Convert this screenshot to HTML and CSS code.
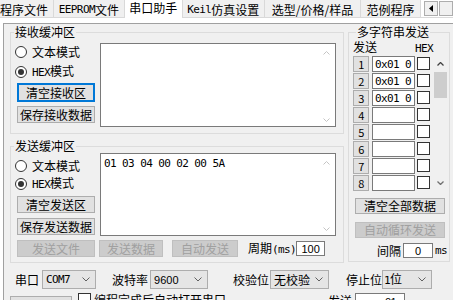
FILE: index.html
```html
<!DOCTYPE html>
<html lang="zh-CN">
<head>
    <meta charset="UTF-8">
    <title>串口助手</title>
    <link rel="stylesheet" href="styles.css">
</head>
<body>
<nav class="tabs">
    <div class="tab tab-first">程序文件</div>
    <div class="tab tab-eeprom"><span class="mono">EEPROM</span>文件</div>
    <div class="tab tab-serial">串口助手</div>
    <div class="tab tab-keil"><span class="mono">Keil</span>仿真设置</div>
    <div class="tab tab-select">选型/价格/样品</div>
    <div class="tab tab-demo">范例程序</div>
    <div class="tab-scroll">
        <span class="tab-arrow"><svg width="4" height="7" viewBox="0 0 4 7"><path d="M4 0V7L0 3.5z"/></svg></span>
        <span class="tab-arrow"></span>
    </div>
</nav>

<div class="page">
    <div class="panel">
        <div class="top">
            <div class="left-col">
                <!-- receive buffer -->
                <fieldset class="group recv">
                    <legend>接收缓冲区</legend>
                    <div class="group-body">
                        <div class="controls">
                            <label class="radio"><span class="dot"></span><span>文本模式</span></label>
                            <label class="radio checked"><span class="dot"></span><span><span class="mono">HEX</span>模式</span></label>
                            <button class="btn focused">清空接收区</button>
                            <button class="btn">保存接收数据</button>
                        </div>
                        <div class="textbox">
                            <div class="text"></div>
                            <div class="tb-scroll">
                                <svg width="7" height="4" viewBox="0 0 7 4"><path d="M.5 3.5 3.5.5 6.5 3.5" fill="none" stroke="#c4c4c4"/></svg>
                                <svg width="7" height="4" viewBox="0 0 7 4"><path d="M.5.5 3.5 3.5 6.5.5" fill="none" stroke="#c4c4c4"/></svg>
                            </div>
                        </div>
                    </div>
                </fieldset>

                <!-- send buffer -->
                <fieldset class="group send">
                    <legend>发送缓冲区</legend>
                    <div class="group-body">
                        <div class="controls">
                            <label class="radio"><span class="dot"></span><span>文本模式</span></label>
                            <label class="radio checked"><span class="dot"></span><span><span class="mono">HEX</span>模式</span></label>
                            <button class="btn">清空发送区</button>
                            <button class="btn">保存发送数据</button>
                        </div>
                        <div class="textbox">
                            <div class="text mono">01 03 04 00 02 00 5A</div>
                            <div class="tb-scroll">
                                <svg width="7" height="4" viewBox="0 0 7 4"><path d="M.5 3.5 3.5.5 6.5 3.5" fill="none" stroke="#c4c4c4"/></svg>
                                <svg width="7" height="4" viewBox="0 0 7 4"><path d="M.5.5 3.5 3.5 6.5.5" fill="none" stroke="#c4c4c4"/></svg>
                            </div>
                        </div>
                    </div>
                    <div class="send-actions">
                        <button class="btn off b-file">发送文件</button>
                        <button class="btn off b-data">发送数据</button>
                        <button class="btn off b-auto">自动发送</button>
                        <span class="period">周期<span class="mono">(ms)</span></span>
                        <span class="field period-val">100</span>
                    </div>
                </fieldset>
            </div>

            <!-- multi string send -->
            <fieldset class="group multi">
                <legend>多字符串发送</legend>
                <div class="multi-head">
                    <span>发送</span>
                    <span class="mono hex">HEX</span>
                </div>
                <div class="multi-list">
                    <div class="rows">
                        <div class="row"><button class="btn num mono">1</button><span class="cell mono">0x01 0</span><span class="check"></span></div>
                        <div class="row"><button class="btn num mono">2</button><span class="cell mono">0x01 0</span><span class="check"></span></div>
                        <div class="row"><button class="btn num mono">3</button><span class="cell mono">0x01 0</span><span class="check"></span></div>
                        <div class="row"><button class="btn num mono">4</button><span class="cell"></span><span class="check"></span></div>
                        <div class="row"><button class="btn num mono">5</button><span class="cell"></span><span class="check"></span></div>
                        <div class="row"><button class="btn num mono">6</button><span class="cell"></span><span class="check"></span></div>
                        <div class="row"><button class="btn num mono">7</button><span class="cell"></span><span class="check"></span></div>
                        <div class="row"><button class="btn num mono">8</button><span class="cell"></span><span class="check"></span></div>
                    </div>
                    <div class="vscroll">
                        <span class="vs-arrow"><svg width="7" height="4" viewBox="0 0 7 4"><path d="M.5 3.5 3.5.5 6.5 3.5" fill="none" stroke="#404040" stroke-width="1.3"/></svg></span>
                        <span class="vs-thumb"></span>
                        <span class="vs-track"></span>
                        <span class="vs-arrow"><svg width="7" height="4" viewBox="0 0 7 4"><path d="M.5.5 3.5 3.5 6.5.5" fill="none" stroke="#707070" stroke-width="1.3"/></svg></span>
                    </div>
                </div>
                <button class="btn wide">清空全部数据</button>
                <button class="btn wide off">自动循环发送</button>
                <div class="gap-row">
                    <span>间隔</span>
                    <span class="field gap-val">0</span>
                    <span class="mono ms">ms</span>
                </div>
            </fieldset>
        </div>

        <!-- serial settings -->
        <div class="serial">
            <span>串口</span>
            <span class="combo c-port"><span class="mono">COM7</span><svg width="8" height="5" viewBox="0 0 8 5"><path d="M.5.5 4 4 7.5.5" fill="none" stroke="#606060"/></svg></span>
            <span class="s-baud">波特率</span>
            <span class="combo c-baud"><span class="num-text">9600</span><svg width="8" height="5" viewBox="0 0 8 5"><path d="M.5.5 4 4 7.5.5" fill="none" stroke="#606060"/></svg></span>
            <span class="s-parity">校验位</span>
            <span class="combo c-parity"><span>无校验</span><svg width="8" height="5" viewBox="0 0 8 5"><path d="M.5.5 4 4 7.5.5" fill="none" stroke="#606060"/></svg></span>
            <span class="s-stop">停止位</span>
            <span class="combo c-stop"><span><span class="mono">1</span>位</span><svg width="8" height="5" viewBox="0 0 8 5"><path d="M.5.5 4 4 7.5.5" fill="none" stroke="#606060"/></svg></span>
        </div>

        <div class="extra">
            <button class="btn extra-btn"></button>
            <span class="check extra-check"></span>
            <span class="extra-label">编程完成后自动打开串口</span>
            <span class="extra-send">发送</span>
            <span class="field extra-val mono">01</span>
        </div>
    </div>
</div>
</body>
</html>
```

FILE: styles.css
```css
* {
    box-sizing: border-box;
    margin: 0;
    padding: 0;
}

body {
    width: 453px;
    height: 300px;
    overflow: hidden;
    background: #fff;
    color: #000;
    font-family: "Noto Sans CJK SC", "Liberation Sans", sans-serif;
    font-size: 12px;
    line-height: 12px;
}

.mono {
    font-family: "DejaVu Sans Mono", "Liberation Mono", monospace;
    font-size: 11px;
    letter-spacing: -0.6px;
}

/* tab strip */
.tabs {
    display: flex;
    height: 18px;
    border-bottom: 1px solid #d9d9d9;
}

.tab {
    display: flex;
    align-items: center;
    justify-content: center;
    height: 17px;
    padding-top: 2px;
    background: #f0f0f0;
    border-right: 1px solid #d9d9d9;
    white-space: nowrap;
}

.tab-first {
    width: 55px;
    justify-content: flex-end;
    padding-right: 5px;
}

.tab-eeprom { width: 72px; }
.tab-keil { width: 84px; }
.tab-select { width: 98px; }
.tab-demo { width: 61px; }

.tab-serial {
    width: 59px;
    height: 18px;
    margin-bottom: -1px;
    padding-top: 0;
    padding-bottom: 3px;
    background: #fff;
}

.tab-scroll {
    display: flex;
    gap: 1px;
    margin-left: 3px;
    padding-top: 1px;
}

.tab-arrow {
    display: flex;
    align-items: center;
    justify-content: center;
    width: 14px;
    height: 15px;
    border: 1px solid #adadad;
    background: #f0f0f0;
}

/* page */
.page {
    padding: 5px 0 0 3px;
}

.panel {
    height: 277px;
    overflow: hidden;
    background: #f0f0f0;
    border-top: 1px solid #a0a0a0;
    border-left: 1px solid #a0a0a0;
}

.top {
    display: flex;
    align-items: flex-start;
    padding: 2px 0 0 6px;
}

.left-col {
    display: flex;
    flex-direction: column;
    gap: 6px;
    width: 334px;
}

.group {
    min-width: 0;
    border: 1px solid #dcdcdc;
}

.group legend {
    height: 12px;
    margin-left: 3px;
    padding: 0 1px;
    line-height: 12px;
}

.recv { height: 108px; }
.send { height: 123px; }

.group-body {
    display: flex;
    align-items: flex-start;
}

.controls {
    display: flex;
    flex-direction: column;
    align-items: flex-start;
    width: 89px;
    padding: 4px 0 0 4px;
}

.radio {
    display: flex;
    align-items: center;
    gap: 5px;
    height: 20px;
    white-space: nowrap;
}

.send .radio { height: 19px; }
.send .radio + .radio { height: 18px; }

.dot {
    display: flex;
    align-items: center;
    justify-content: center;
    width: 12px;
    height: 12px;
    border: 1px solid #333;
    border-radius: 50%;
    background: #fff;
}

.checked .dot::after {
    content: "";
    width: 6px;
    height: 6px;
    border-radius: 50%;
    background: #333;
}

.btn {
    display: flex;
    align-items: center;
    justify-content: center;
    height: 17px;
    border: 1px solid #adadad;
    background: #e1e1e1;
    color: #000;
    font: inherit;
    line-height: 12px;
    white-space: nowrap;
}

.btn.off {
    border-color: #bfbfbf;
    background: #cccccc;
    color: #a0a0a0;
}

.controls .btn {
    width: 78px;
    margin-left: 2px;
}

.btn.focused {
    height: 19px;
    margin-top: 1px;
    border: 2px solid #0078d7;
}

.recv .btn + .btn { margin-top: 4px; }
.send .controls .btn { margin-top: 3px; }
.send .controls .btn + .btn { margin-top: 5px; }

.textbox {
    display: flex;
    width: 236px;
    height: 84px;
    margin-top: 5px;
    border: 1px solid #7a7a7a;
    background: #fff;
}

.send .textbox {
    height: 83px;
    margin-top: 1px;
}

.textbox .text {
    flex: 1;
    padding: 4px 3px;
    white-space: pre;
}

.tb-scroll {
    display: flex;
    flex-direction: column;
    align-items: center;
    justify-content: space-between;
    width: 17px;
    padding: 7px 0 4px;
}

.send-actions {
    display: flex;
    align-items: center;
    height: 17px;
    margin-top: 4px;
    padding-left: 6px;
}

.b-file { width: 78px; }
.b-data { width: 64px; margin-left: 4px; }
.b-auto { width: 66px; margin-left: 9px; }

.period {
    margin-left: 10px;
    white-space: nowrap;
}

.field {
    display: flex;
    align-items: center;
    justify-content: center;
    border: 1px solid #7a7a7a;
    background: #fff;
    font-family: "Liberation Sans", sans-serif;
    font-size: 11px;
}

.period-val {
    width: 29px;
    height: 15px;
}

/* multi string send */
.multi {
    width: 102px;
    height: 236px;
    margin-left: 4px;
}

.multi legend { margin-left: 7px; }

.multi-head {
    display: flex;
    justify-content: space-between;
    height: 14px;
    margin-top: 3px;
    padding: 0 16px 0 4px;
}

.multi-head .hex {
    align-self: flex-end;
}

.multi-list {
    display: flex;
    padding-left: 4px;
}

.rows {
    display: flex;
    flex-direction: column;
}

.row {
    display: flex;
    align-items: center;
    height: 17px;
}

.btn.num {
    width: 16px;
    height: 16px;
    font-size: 11px;
}

.cell {
    width: 43px;
    height: 16px;
    margin-left: 3px;
    padding: 2px 0 0 2px;
    overflow: hidden;
    border: 1px solid #7a7a7a;
    background: #fff;
    white-space: pre;
}

.check {
    width: 13px;
    height: 13px;
    margin-left: 2px;
    border: 1px solid #333;
    background: #fff;
}

.vscroll {
    display: flex;
    flex-direction: column;
    align-items: center;
    width: 14px;
    margin-left: 3px;
}

.vs-arrow {
    display: flex;
    align-items: center;
    justify-content: center;
    height: 17px;
}

.vs-thumb {
    width: 13px;
    height: 26px;
    background: #cdcdcd;
}

.vs-track { flex: 1; }

.btn.wide {
    width: 90px;
    height: 16px;
    margin: 7px 0 0 6px;
}

.btn.wide + .btn.wide { margin-top: 8px; }

.gap-row {
    display: flex;
    align-items: center;
    justify-content: flex-end;
    height: 15px;
    margin-top: 5px;
    padding-right: 2px;
}

.gap-val {
    width: 30px;
    height: 15px;
    margin-left: 2px;
}

.ms { margin-left: 2px; }

/* serial settings */
.serial {
    display: flex;
    align-items: center;
    height: 19px;
    margin-top: 7px;
    padding-left: 11px;
    white-space: nowrap;
}

.combo {
    display: flex;
    align-items: center;
    justify-content: space-between;
    height: 19px;
    padding: 0 5px 0 3px;
    border: 1px solid #adadad;
    background: #e5e5e5;
}

.num-text {
    font-family: "Liberation Sans", sans-serif;
    font-size: 11px;
}

.c-port { width: 54px; margin-left: 3px; }
.s-baud { margin-left: 16px; }
.c-baud { width: 58px; margin-left: 2px; }
.s-parity { margin-left: 25px; }
.c-parity { width: 59px; margin-left: 1px; }
.s-stop { margin-left: 17px; }
.c-stop { width: 50px; padding-left: 1px; }

/* partly visible row below */
.extra {
    display: flex;
    align-items: flex-start;
    margin-top: 4px;
    white-space: nowrap;
}

.extra-btn {
    width: 62px;
    height: 20px;
    margin: 3px 0 0 6px;
}

.extra-check { margin-left: 6px; }

.extra-label {
    margin: 1px 0 0 3px;
}

.extra-send {
    margin: 2px 0 0 102px;
}

.extra-val {
    justify-content: flex-end;
    width: 50px;
    height: 18px;
    margin-left: 3px;
    padding-right: 8px;
}
```
